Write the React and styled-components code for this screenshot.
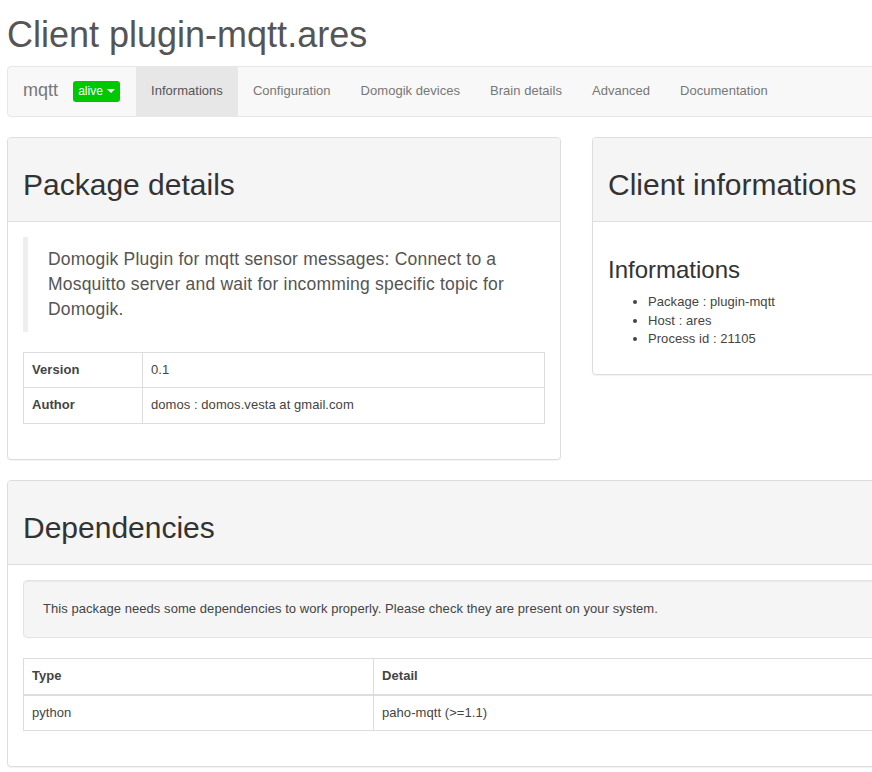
import React from "react";
import styled, { createGlobalStyle } from "styled-components";

const Global = createGlobalStyle`
  html, body { margin: 0; padding: 0; overflow: hidden; background: #fff; }
  body {
    font-family: "Liberation Sans", Arial, Helvetica, sans-serif;
    font-size: 13px;
    line-height: 1.42857;
    color: #444;
    letter-spacing: 0.06px;
  }
  * { box-sizing: border-box; }
`;

const Page = styled.div`
  width: 1160px;
  padding: 0 7px;
`;

const Title = styled.h1`
  font-size: 36px;
  font-weight: 500;
  line-height: 1.1;
  color: #555;
  letter-spacing: 0;
  margin: 15px 0 11px;
`;

const Navbar = styled.nav`
  display: flex;
  align-items: stretch;
  min-height: 51px;
  background: #f8f8f8;
  border: 1px solid #e7e7e7;
  border-radius: 4px;
  margin-bottom: 20px;
  letter-spacing: 0.03px;
`;

const Brand = styled.span`
  display: flex;
  align-items: center;
  padding: 0 15px;
  font-size: 18px;
  color: #777;
`;

const StatusButton = styled.span`
  align-self: center;
  display: inline-flex;
  align-items: center;
  gap: 4px;
  height: 21px;
  padding: 0 5px;
  margin-right: 16px;
  background: #00c800;
  color: #fff;
  border-radius: 3px;
  font-size: 12px;
`;

const Caret = styled.span`
  width: 0;
  height: 0;
  border-top: 4px solid #fff;
  border-left: 4px solid transparent;
  border-right: 4px solid transparent;
`;

const NavLink = styled.a`
  display: flex;
  align-items: center;
  padding: 0 15px;
  color: ${(p) => (p.$active ? "#555" : "#777")};
  background: ${(p) => (p.$active ? "#e7e7e7" : "transparent")};
  text-decoration: none;
`;

const Row = styled.div`
  display: grid;
  grid-template-columns: 554px 554px;
  column-gap: 31px;
  align-items: start;
`;

const Panel = styled.section`
  background: #fff;
  border: 1px solid #ddd;
  border-radius: 4px;
  box-shadow: 0 1px 1px rgba(0, 0, 0, 0.05);
  margin-bottom: 20px;
  overflow: hidden;
`;

const PanelHeading = styled.div`
  background: #f5f5f5;
  border-bottom: 1px solid #ddd;
  padding: 10px 15px;
`;

const PanelTitle = styled.h2`
  font-size: 30px;
  font-weight: 500;
  line-height: 33px;
  color: #333;
  letter-spacing: 0;
  margin: 20px 0 10px;
`;

const PanelBody = styled.div`
  padding: 15px;
`;

const Quote = styled.blockquote`
  margin: 0 0 20px;
  padding: 10px 20px;
  border-left: 5px solid #eee;
  font-size: 17.5px;
  line-height: 25px;
  letter-spacing: 0.2px;
  color: #555;
`;

const Table = styled.table`
  width: 100%;
  border-collapse: collapse;
  margin-bottom: 20px;
`;

const Cell = styled.td`
  padding: 8px;
  border: 1px solid #ddd;
  line-height: 1.42857;
  text-align: left;
  vertical-align: top;
  font-weight: ${(p) => (p.$bold ? 700 : 400)};
  width: ${(p) => p.$w || "auto"};
`;

const HeadCell = styled.th`
  padding: 8px;
  border: 1px solid #ddd;
  border-bottom: 2px solid #ddd;
  line-height: 1.42857;
  text-align: left;
  font-weight: 700;
  width: ${(p) => p.$w || "auto"};
`;

const SubTitle = styled.h3`
  font-size: 24px;
  font-weight: 500;
  line-height: 1.1;
  color: #333;
  letter-spacing: 0;
  margin: 20px 0 10px;
`;

const List = styled.ul`
  margin: 0 0 10px;
  padding-left: 40px;
`;

const Well = styled.div`
  background: #f5f5f5;
  border: 1px solid #e3e3e3;
  border-radius: 4px;
  box-shadow: inset 0 1px 1px rgba(0, 0, 0, 0.05);
  padding: 19px;
  margin-bottom: 20px;
`;

const navItems = [
  "Informations",
  "Configuration",
  "Domogik devices",
  "Brain details",
  "Advanced",
  "Documentation",
];

export default function App() {
  return (
    <Page>
      <Global />
      <Title>Client plugin-mqtt.ares</Title>
      <Navbar>
        <Brand>mqtt</Brand>
        <StatusButton>
          alive <Caret />
        </StatusButton>
        {navItems.map((n, i) => (
          <NavLink key={n} $active={i === 0}>
            {n}
          </NavLink>
        ))}
      </Navbar>
      <Row>
        <Panel>
          <PanelHeading>
            <PanelTitle>Package details</PanelTitle>
          </PanelHeading>
          <PanelBody>
            <Quote>
              Domogik Plugin for mqtt sensor messages: Connect to a Mosquitto
              server and wait for incomming specific topic for Domogik.
            </Quote>
            <Table>
              <tbody>
                <tr>
                  <Cell $bold $w="119px">Version</Cell>
                  <Cell>0.1</Cell>
                </tr>
                <tr>
                  <Cell $bold $w="119px">Author</Cell>
                  <Cell>domos : domos.vesta at gmail.com</Cell>
                </tr>
              </tbody>
            </Table>
          </PanelBody>
        </Panel>
        <Panel>
          <PanelHeading>
            <PanelTitle>Client informations</PanelTitle>
          </PanelHeading>
          <PanelBody>
            <SubTitle>Informations</SubTitle>
            <List>
              <li>Package : plugin-mqtt</li>
              <li>Host : ares</li>
              <li>Process id : 21105</li>
            </List>
          </PanelBody>
        </Panel>
      </Row>
      <Panel>
        <PanelHeading>
          <PanelTitle>Dependencies</PanelTitle>
        </PanelHeading>
        <PanelBody>
          <Well>
            This package needs some dependencies to work properly. Please check
            they are present on your system.
          </Well>
          <Table>
            <thead>
              <tr>
                <HeadCell $w="350px">Type</HeadCell>
                <HeadCell>Detail</HeadCell>
              </tr>
            </thead>
            <tbody>
              <tr>
                <Cell>python</Cell>
                <Cell>paho-mqtt (&gt;=1.1)</Cell>
              </tr>
            </tbody>
          </Table>
        </PanelBody>
      </Panel>
    </Page>
  );
}
